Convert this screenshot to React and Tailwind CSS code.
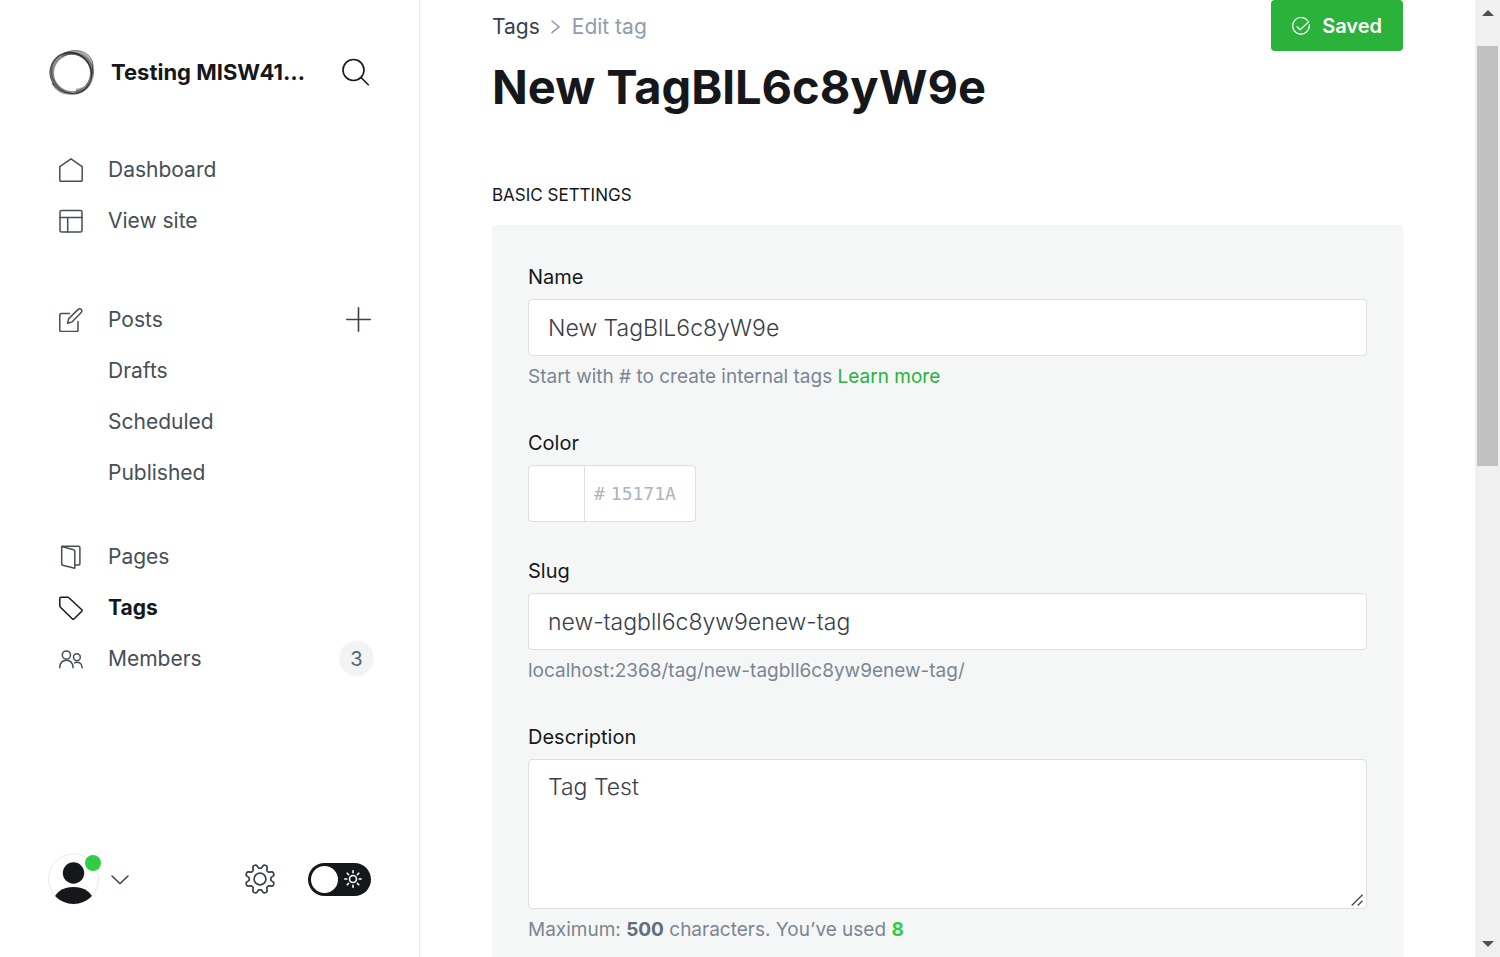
import React, { useState } from "react";

const gearPath =
  Array.from({ length: 144 }, (_, i) => {
    const t = (i / 144) * Math.PI * 2;
    const r = 12.7 + 2 * Math.tanh(-2 * Math.cos(8 * t));
    return `${i ? "L" : "M"}${(15 + r * Math.cos(t)).toFixed(2)} ${(15 + r * Math.sin(t)).toFixed(2)}`;
  }).join("") + "Z";

function Icon({ children, size = 24, className = "", width = 1.5 }) {
  return (
    <svg
      aria-hidden="true"
      width={size}
      height={size}
      viewBox={`0 0 ${size} ${size}`}
      fill="none"
      stroke="currentColor"
      strokeWidth={width}
      strokeLinecap="round"
      strokeLinejoin="round"
      className={`shrink-0 ${className}`}
    >
      {children}
    </svg>
  );
}

const icons = {
  home: <path d="M12 .8.8 8.6v13.6a1.1 1.1 0 0 0 1.1 1.1h20.2a1.1 1.1 0 0 0 1.1-1.1V8.6Z" />,
  layout: (
    <>
      <rect x="1" y="1.5" width="22" height="21.5" rx="1.5" />
      <path d="M1 8.5h22M8.7 8.5V23" />
    </>
  ),
  edit: (
    <>
      <path d="M10.5 5.5H2A1.2 1.2 0 0 0 .8 6.7v15.5a1.2 1.2 0 0 0 1.2 1.2h15.8a1.2 1.2 0 0 0 1.2-1.2V13.5" />
      <path d="m8.6 15.3 1.1-4.7L19.2 1.4a2.1 2.1 0 0 1 3 0 2.1 2.1 0 0 1 0 3L13 13.9Z" />
    </>
  ),
  pages: (
    <>
      <path d="m2.7 1.5 12 3.2a1.4 1.4 0 0 1 1.1 1.3v17.2L3.6 20.3a1.2 1.2 0 0 1-.9-1.2Z" />
      <path d="M2.9 1.2h16.8a1.2 1.2 0 0 1 1.2 1.2v16.4a1.2 1.2 0 0 1-1.2 1.2h-3.5" />
    </>
  ),
  tag: <path d="M2.2 1.2h6.3a2 2 0 0 1 1.4.6l12.9 12a1 1 0 0 1 0 1.4l-7.9 7.8a1 1 0 0 1-1.4 0L1.4 11.2a2 2 0 0 1-.6-1.4V2.6a1.4 1.4 0 0 1 1.4-1.4Z" />,
  members: (
    <>
      <circle cx="7.4" cy="8" r="4.1" />
      <path d="M.8 20.7v-.9a6.6 6.6 0 0 1 13.2 0v.9" />
      <circle cx="17.9" cy="10.2" r="3.4" />
      <path d="M15.6 15.8a5.2 5.2 0 0 1 7.6 4.6v.3" />
    </>
  ),
};

function Logo() {
  return (
    <svg aria-hidden="true" width="48" height="48" viewBox="0 0 48 48" fill="none" className="shrink-0">
      <g fill="#15171a" fillRule="evenodd">
        <path fillOpacity=".5" d="M1.5 24.5a20.5 20.5 0 1 0 41 0a20.5 20.5 0 1 0-41 0ZM6 25a18.2 18.2 0 1 0 36.4 0a18.2 18.2 0 1 0-36.4 0Z" />
        <path fillOpacity=".35" d="M7.5 21.5a19.3 19.3 0 1 0 38.6 0a19.3 19.3 0 1 0-38.6 0ZM5 25.2a18.5 18.5 0 1 0 37 0a18.5 18.5 0 1 0-37 0Z" clipPath="url(#logo-right)" />
        <path fillOpacity=".35" d="M6 25a20 20.8 0 1 0 40 0a20 20.8 0 1 0-40 0ZM5 24.5a18.6 19 0 1 0 37.2 0a18.6 19 0 1 0-37.2 0Z" clipPath="url(#logo-right)" />
      </g>
      <clipPath id="logo-right">
        <path d="M14 0h34v48H28V20H14Z" />
      </clipPath>
      <g stroke="#15171a">
        <ellipse cx="22.7" cy="25" rx="21" ry="20" transform="rotate(30 22.7 25)" strokeWidth=".9" strokeOpacity=".5" />
        <path d="M16 5C26 1 38 1.500 43.500 11c2.500 5 0 8 1.500 15" strokeWidth=".8" strokeOpacity=".6" />
        <ellipse cx="23.6" cy="25" rx="21.500" ry="19.3" transform="rotate(52 23.6 25)" strokeWidth="1.2" strokeOpacity=".5" />
        <path d="M4 35a21.500 21.500 0 0 0 37 1" strokeWidth="1.6" strokeOpacity=".5" />
      </g>
    </svg>
  );
}

function NavItem({ icon, label, active, children }) {
  return (
    <li className="flex h-[51px] items-center justify-between">
      <a
        href="#"
        aria-current={active ? "page" : undefined}
        className={`flex items-center text-[21px] leading-6 ${active ? "font-bold text-[#15171a]" : "font-normal text-[#464e56]"}`}
      >
        <span className="flex w-[49px]">{icon && <Icon>{icons[icon]}</Icon>}</span>
        {label}
      </a>
      {children}
    </li>
  );
}

function Sidebar() {
  const [night, setNight] = useState(false);
  return (
    <aside className="flex w-[420px] shrink-0 flex-col justify-between border-r border-[#e6e9eb] pl-12 pr-[45px]">
      <div>
        <header className="flex h-36 items-center">
          <Logo />
          <span className="ml-[15px] w-[200px] truncate text-[22px] font-bold text-[#15171a]">Testing MISW4103</span>
          <button type="button" aria-label="Search" className="mr-1 ml-auto text-[#15171a]">
            <Icon size={28} width={1.6}>
              <circle cx="11.5" cy="12" r="10.5" />
              <path d="m19.2 19.7 7.1 7.1" />
            </Icon>
          </button>
        </header>
        <nav aria-label="Main" className="pl-[11px]">
          <ul>
            <NavItem icon="home" label="Dashboard" />
            <NavItem icon="layout" label="View site" />
          </ul>
          <ul className="mt-12">
            <NavItem icon="edit" label="Posts">
              <button type="button" aria-label="New post" className="mr-[3px] text-[#394047]">
                <Icon size={25} width={1.6}>
                  <path d="M12.5.8v23.4M.8 12.5h23.4" />
                </Icon>
              </button>
            </NavItem>
            <NavItem label="Drafts" />
            <NavItem label="Scheduled" />
            <NavItem label="Published" />
          </ul>
          <ul className="mt-[33px]">
            <NavItem icon="pages" label="Pages" />
            <NavItem icon="tag" label="Tags" active />
            <NavItem icon="members" label="Members">
              <span className="flex size-[35px] items-center justify-center rounded-full bg-[#f1f3f4] text-[20px] text-[#54666d]">3</span>
            </NavItem>
          </ul>
        </nav>
      </div>
      <footer className="mr-[3px] mb-[52px] flex items-center">
        <button type="button" aria-label="Account menu" className="flex items-center text-[#394047]">
          <span className="relative">
            <svg aria-hidden="true" width="52" height="52" viewBox="0 0 52 52">
              <clipPath id="avatar">
                <circle cx="25.5" cy="26" r="25" />
              </clipPath>
              <circle cx="25.5" cy="26" r="25" fill="#fff" stroke="#e8eaeb" />
              <g clipPath="url(#avatar)" fill="#15171a">
                <circle cx="25.5" cy="20" r="10.7" />
                <ellipse cx="25.5" cy="48.5" rx="20" ry="14.5" />
              </g>
            </svg>
            <span className="absolute top-[2px] -right-px size-4 rounded-full bg-[#30cf43]" />
          </span>
          <Icon size={18} className="ml-[11px]">
            <path d="m1 6 7.3 7a1 1 0 0 0 1.4 0L17 6" />
          </Icon>
        </button>
        <button type="button" aria-label="Settings" className="ml-auto text-[#394047]">
          <Icon size={30} width={1.7}>
            <path d={gearPath} />
            <circle cx="15" cy="15" r="5.9" />
          </Icon>
        </button>
        <button
          type="button"
          role="switch"
          aria-label="Night mode"
          aria-checked={night}
          onClick={() => setNight(!night)}
          className="ml-[33px] flex h-[33px] w-[63px] items-center justify-between rounded-full bg-[#15171a] pr-[9px] pl-[3px] text-white"
        >
          <span className="size-[27px] rounded-full bg-white" />
          <Icon size={18} width={1.6}>
            <circle cx="9" cy="9" r="3.5" />
            <path d="M9 .8v2M9 15.2v2M.8 9h2M15.2 9h2M3.2 3.2l1.4 1.4M13.4 13.4l1.4 1.4M3.2 14.8l1.4-1.4M13.4 4.6l1.4-1.4" />
          </Icon>
        </button>
      </footer>
    </aside>
  );
}

function Field({ id, label, hint, children }) {
  return (
    <div>
      <label htmlFor={id} className="mb-[6px] block text-[20px] leading-8 text-[#15171a]">
        {label}
      </label>
      {children}
      {hint && <p className="mt-[7px] pb-[3px] text-[19px] leading-7 text-[#7c8593]">{hint}</p>}
    </div>
  );
}

const box = "block w-full rounded-[4px] border border-[#dddfe0] bg-white px-[19px] text-[23px] font-light text-[#394047] outline-none";

function Scrollbar() {
  return (
    <div aria-hidden="true" className="flex w-[25px] shrink-0 flex-col items-center justify-between bg-[#f0f0f0] py-[10px]">
      <div className="flex w-full flex-col items-center px-[2px]">
        <svg width="12" height="6" viewBox="0 0 12 6" fill="#505050">
          <path d="M6 0 12 6H0Z" />
        </svg>
        <div className="mt-[30px] h-[420px] w-full bg-[#c1c1c1]" />
      </div>
      <svg width="12" height="6" viewBox="0 0 12 6" fill="#505050">
        <path d="M0 0h12L6 6Z" />
      </svg>
    </div>
  );
}

export default function App() {
  const [name, setName] = useState("New TagBlL6c8yW9e");
  const [slug, setSlug] = useState("new-tagbll6c8yw9enew-tag");
  const [color, setColor] = useState("");
  const [description, setDescription] = useState("Tag Test");

  return (
    <div className="flex h-screen overflow-hidden bg-white font-[Inter,sans-serif]">
      <Sidebar />
      <main className="min-w-0 flex-1 overflow-y-auto px-[72px] [scrollbar-width:none]">
        <div className="flex h-[51px] items-center justify-between">
          <nav aria-label="Breadcrumb" className="flex items-center pt-[2px] text-[21px]">
            <a href="#" className="text-[#394047]">Tags</a>
            <Icon size={14} className="mx-[9px] text-[#8e9cac]">
              <path d="m3 1 7 5.8-7 5.8" />
            </Icon>
            <span className="text-[#8e9cac]">Edit tag</span>
          </nav>
          <button type="button" className="flex h-full items-center gap-3 rounded-[4px] bg-[#2ab23b] px-[21px] text-[20px] font-semibold text-white">
            <Icon size={18} width={1.3}>
              <path d="M15.4 3.4A8.3 8.3 0 1 0 17.3 8" />
              <path d="m5 9.8 3.2 3L16.8 4.6" />
            </Icon>
            Saved
          </button>
        </div>
        <h1 className="mt-[6px] text-[47px] leading-[60px] font-bold text-[#15171a]">{name}</h1>
        <h2 className="mt-[66px] mb-[18px] text-[17px] leading-6 text-[#15171a] uppercase">Basic settings</h2>
        <form className="flex flex-col gap-[33px] rounded-[4px] bg-[#f5f7f7] p-9" onSubmit={(e) => e.preventDefault()}>
          <Field
            id="name"
            label="Name"
            hint={
              <>
                Start with # to create internal tags{" "}
                <a href="#" className="text-[#2ab23b]">Learn more</a>
              </>
            }
          >
            <input id="name" value={name} onChange={(e) => setName(e.target.value)} className={`${box} h-[57px]`} />
          </Field>
          <Field id="color" label="Color">
            <div className="flex h-[57px] w-[168px] rounded-[4px] border border-[#dddfe0] bg-white">
              <button type="button" aria-label="Pick a color" className="w-14 border-r border-[#dddfe0]" />
              <div className="flex min-w-0 flex-1 items-center pl-[9px] font-['DejaVu_Sans_Mono',monospace] text-[18px] text-[#abb4be]">
                <span className="mr-[6px]">#</span>
                <input
                  id="color"
                  value={color}
                  placeholder="15171A"
                  onChange={(e) => setColor(e.target.value)}
                  className="w-full min-w-0 bg-transparent outline-none placeholder:text-[#abb4be]"
                />
              </div>
            </div>
          </Field>
          <Field id="slug" label="Slug" hint={`localhost:2368/tag/${slug}/`}>
            <input id="slug" value={slug} onChange={(e) => setSlug(e.target.value)} className={`${box} h-[57px]`} />
          </Field>
          <Field
            id="description"
            label="Description"
            hint={
              <>
                Maximum: <b className="font-bold text-[#626d79]">500</b> characters. You’ve used{" "}
                <b className="font-bold text-[#30cf43]">{description.length}</b>
              </>
            }
          >
            <div className="relative">
              <textarea
                id="description"
                value={description}
                onChange={(e) => setDescription(e.target.value)}
                className={`${box} h-[150px] resize-y py-[9px] leading-9`}
              />
              <svg
                aria-hidden="true"
                width="14"
                height="14"
                viewBox="0 0 14 14"
                className="pointer-events-none absolute right-[2px] bottom-[2px] bg-white"
                stroke="#505050"
                strokeWidth="1.5"
              >
                <path d="M.7 12.5 11.5 1.7M6.7 12.5l4.8-4.8" />
              </svg>
            </div>
          </Field>
        </form>
      </main>
      <Scrollbar />
    </div>
  );
}
